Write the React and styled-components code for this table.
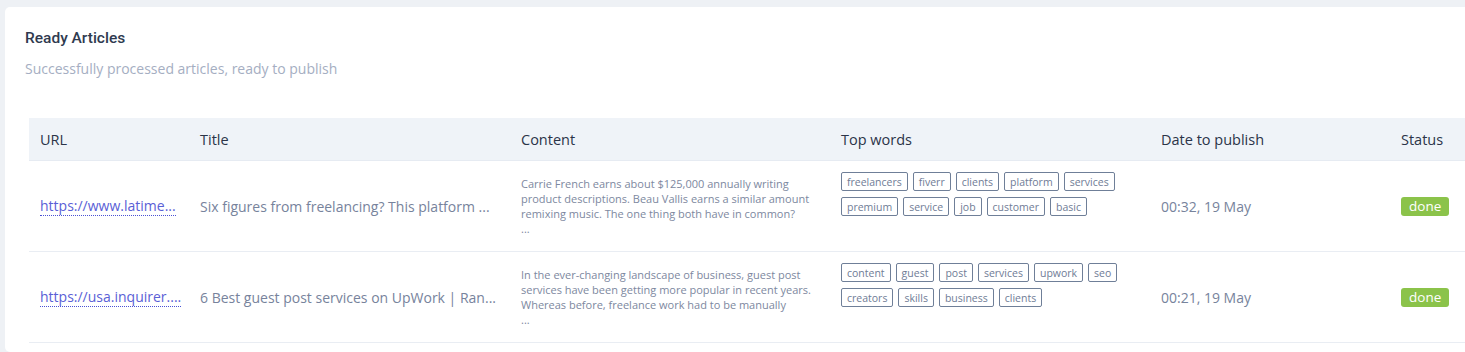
import React from "react";
import styled, { createGlobalStyle } from "styled-components";

const articles = [
  {
    url: "https://www.latime...",
    title: "Six figures from freelancing? This platform ...",
    content:
      "Carrie French earns about $125,000 annually writing product descriptions. Beau Vallis earns a similar amount remixing music. The one thing both have in common?",
    words: ["freelancers", "fiverr", "clients", "platform", "services", "premium", "service", "job", "customer", "basic"],
    date: "00:32, 19 May",
    status: "done",
  },
  {
    url: "https://usa.inquirer....",
    title: "6 Best guest post services on UpWork | Ran...",
    content:
      "In the ever-changing landscape of business, guest post services have been getting more popular in recent years. Whereas before, freelance work had to be manually",
    words: ["content", "guest", "post", "services", "upwork", "seo", "creators", "skills", "business", "clients"],
    date: "00:21, 19 May",
    status: "done",
  },
];

const columns = [
  { label: "URL", width: 160 },
  { label: "Title", width: 321 },
  { label: "Content", width: 320 },
  { label: "Top words", width: 320 },
  { label: "Date to publish", width: 240 },
  { label: "Status", width: 110 },
];

const App = () => {
  return (
    <>
      <GlobalStyle />
      <Page>
        <Card>
          <CardTitle>Ready Articles</CardTitle>
          <CardSubtitle>Successfully processed articles, ready to publish</CardSubtitle>
          <Table>
            <colgroup>
              {columns.map((c) => (
                <col key={c.label} style={{ width: c.width }} />
              ))}
            </colgroup>
            <thead>
              <tr>
                {columns.map((c) => (
                  <Th key={c.label}>{c.label}</Th>
                ))}
              </tr>
            </thead>
            <tbody>
              {articles.map((a) => (
                <tr key={a.url}>
                  <Td>
                    <UrlLink href="#">{a.url}</UrlLink>
                  </Td>
                  <Td>{a.title}</Td>
                  <Td>
                    <Excerpt>
                      {a.content}
                      <br />
                      ...
                    </Excerpt>
                  </Td>
                  <Td $top>
                    <Tags>
                      {a.words.map((w) => (
                        <Tag key={w}>{w}</Tag>
                      ))}
                    </Tags>
                  </Td>
                  <Td>{a.date}</Td>
                  <Td>
                    <Badge>{a.status}</Badge>
                  </Td>
                </tr>
              ))}
            </tbody>
          </Table>
        </Card>
      </Page>
    </>
  );
};

export default App;

const GlobalStyle = createGlobalStyle`
  body {
    margin: 0;
    background: #eef1f5;
    overflow: hidden;
    font-family: "Open Sans", "Noto Sans", sans-serif;
  }
`;

const Page = styled.div`
  padding: 7px 0 0 5px;
  width: 1500px;
`;

const Card = styled.div`
  background: #fff;
  border-radius: 5px;
  padding: 22px 0 0 20px;
  min-height: 345px;
  box-sizing: border-box;
`;

const CardTitle = styled.div`
  font-family: Roboto, sans-serif;
  font-weight: 500;
  font-size: 15.5px;
  line-height: 18px;
  color: #2f3a4f;
`;

const CardSubtitle = styled.div`
  margin-top: 12px;
  font-size: 14px;
  line-height: 20px;
  color: #a5aec2;
`;

const Table = styled.table`
  margin: 39px 0 0 4px;
  border-collapse: collapse;
  table-layout: fixed;
  width: 1471px;
`;

const Th = styled.th`
  height: 42px;
  padding: 0 11px;
  background: #eff3f8;
  border-bottom: 1px solid #e6ebf2;
  text-align: left;
  font-weight: 400;
  font-size: 14.5px;
  color: #2b3448;
`;

const Td = styled.td`
  height: 91px;
  padding: ${({ $top }) => ($top ? "11px 11px 0" : "0 11px")};
  vertical-align: ${({ $top }) => ($top ? "top" : "middle")};
  border-bottom: 1px solid #e9edf3;
  font-size: 14px;
  color: #77839c;
  white-space: ${({ $top }) => ($top ? "normal" : "nowrap")};
  box-sizing: border-box;
`;

const UrlLink = styled.a`
  display: inline-block;
  color: #5a60d6;
  text-decoration: none;
  border-bottom: 1px dotted #4a51d4;
  line-height: 18px;
`;

const Excerpt = styled.div`
  font-size: 11px;
  line-height: 15px;
  color: #7d88a0;
  white-space: normal;
`;

const Tags = styled.div`
  display: flex;
  flex-wrap: wrap;
  gap: 6px 5px;
`;

const Tag = styled.span`
  display: inline-flex;
  align-items: center;
  height: 19px;
  padding: 0 5px;
  border: 1px solid #6f7f98;
  border-radius: 2px;
  box-sizing: border-box;
  font-size: 10.5px;
  color: #6f7c96;
`;

const Badge = styled.span`
  display: inline-block;
  padding: 0 8px;
  height: 19px;
  line-height: 19px;
  border-radius: 3px;
  background: #8bc34a;
  color: #fff;
  font-size: 13.5px;
`;
